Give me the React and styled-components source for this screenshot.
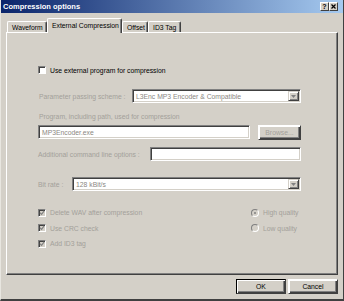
import React from "react";
import styled, { createGlobalStyle } from "styled-components";

const Global = createGlobalStyle`
  html, body {
    margin: 0;
    padding: 0;
    background: #d4d0c8;
  }
  body {
    font-family: "Liberation Sans", Arial, sans-serif;
  }
`;

const Window = styled.div`
  box-sizing: border-box;
  width: 344px;
  height: 301px;
  background: #d4d0c8;
  border-left: 1px solid #e8e6e0;
  border-right: 1px solid #404040;
  border-bottom: 2px solid #404040;
  display: flex;
  flex-direction: column;
  overflow: hidden;
`;

const TitleBar = styled.div`
  height: 13px;
  display: flex;
  align-items: center;
  padding: 0 5px 0 2px;
  background: linear-gradient(to right, #0a246a, #a6caf0);
`;

const Title = styled.div`
  flex: 1;
  color: #fff;
  font-weight: bold;
  font-size: 7.5px;
`;

const CaptionButton = styled.div`
  box-sizing: border-box;
  width: 9px;
  height: 9px;
  background: #d4d0c8;
  border-top: 1px solid #fff;
  border-left: 1px solid #fff;
  border-right: 1px solid #404040;
  border-bottom: 1px solid #404040;
  display: flex;
  align-items: center;
  justify-content: center;
  font-size: 7px;
  font-weight: bold;
  line-height: 1;
  color: #000;
`;

const TabRow = styled.div`
  height: 19px;
  display: flex;
  align-items: flex-end;
  padding-left: 6px;
  position: relative;
  z-index: 1;
`;

const Tab = styled.div`
  box-sizing: border-box;
  height: ${(p) => (p.$active ? "15px" : "11px")};
  margin-bottom: ${(p) => (p.$active ? "-1px" : "0")};
  padding: ${(p) => (p.$active ? "2px 4px 0" : "1px 4px 0")};
  background: #d4d0c8;
  border-top: 1px solid #fff;
  border-left: 1px solid #fff;
  border-right: 1px solid #404040;
  box-shadow: inset -1px 0 #808080;
  border-radius: 2px 2px 0 0;
  font-size: 6.8px;
  line-height: 9px;
  color: #000;
  white-space: nowrap;
  width: ${(p) => p.$w}px;
  text-align: center;
`;

const Panel = styled.div`
  box-sizing: border-box;
  margin: 0 5px 0 5px;
  height: 243px;
  border-top: 1px solid #fff;
  border-left: 1px solid #fff;
  border-right: 1px solid #404040;
  border-bottom: 1px solid #404040;
  box-shadow: inset -1px -1px #808080;
  padding: 0 36px 0 31px;
  display: flex;
  flex-direction: column;
`;

const Row = styled.div`
  display: flex;
  align-items: center;
  height: ${(p) => p.$h || 14}px;
  margin-top: ${(p) => p.$mt}px;
  gap: ${(p) => p.$gap || 0}px;
`;

const Label = styled.div`
  font-size: 6.8px;
  color: ${(p) => (p.$enabled ? "#000" : "#a3a09a")};
  white-space: nowrap;
  width: ${(p) => (p.$w ? `${p.$w}px` : "auto")};
  flex-shrink: 0;
  padding-left: ${(p) => p.$pl || 0}px;
`;

const Sunken = styled.div`
  box-sizing: border-box;
  height: 14px;
  flex: 1;
  background: #fff;
  border-top: 1px solid #808080;
  border-left: 1px solid #808080;
  border-right: 1px solid #fff;
  border-bottom: 1px solid #fff;
  box-shadow: inset 1px 1px #404040, inset -1px -1px #d4d0c8;
  display: flex;
  align-items: center;
  padding-left: 3px;
  font-size: 6.8px;
  color: #8a8782;
  white-space: nowrap;
  overflow: hidden;
`;

const FieldText = styled.div`
  flex: 1;
`;

const ArrowBox = styled.div`
  box-sizing: border-box;
  width: 11px;
  height: 10px;
  margin-right: 1px;
  background: #d4d0c8;
  border-top: 1px solid #d4d0c8;
  border-left: 1px solid #d4d0c8;
  border-right: 1px solid #404040;
  border-bottom: 1px solid #404040;
  box-shadow: inset 1px 1px #fff, inset -1px -1px #808080;
  display: flex;
  align-items: center;
  justify-content: center;
`;

const Button = styled.div`
  box-sizing: border-box;
  width: ${(p) => p.$w}px;
  height: ${(p) => p.$h || 14}px;
  background: #d4d0c8;
  border: 1px solid;
  border-color: ${(p) =>
    p.$default ? "#000 #404040 #404040 #000" : "#fff #404040 #404040 #fff"};
  box-shadow: inset 1px 1px #fff, inset -1px -1px #404040,
    inset -2px -2px #808080;
  display: flex;
  align-items: center;
  justify-content: center;
  font-size: 6.8px;
  color: ${(p) => (p.$disabled ? "#a3a09a" : "#000")};
  flex-shrink: 0;
`;

const Box = styled.div`
  box-sizing: border-box;
  width: 8px;
  height: 8px;
  flex-shrink: 0;
  background: ${(p) => (p.$enabled ? "#fff" : "#d4d0c8")};
  border-top: 1px solid #808080;
  border-left: 1px solid #808080;
  border-right: 1px solid #fff;
  border-bottom: 1px solid #fff;
  box-shadow: inset 1px 1px #404040;
  display: flex;
  align-items: center;
  justify-content: center;
`;

const Radio = styled.div`
  box-sizing: border-box;
  width: 8px;
  height: 8px;
  flex-shrink: 0;
  border-radius: 50%;
  background: #d4d0c8;
  border: 1px solid;
  border-color: #808080 #fff #fff #808080;
  display: flex;
  align-items: center;
  justify-content: center;
`;

const Dot = styled.div`
  width: 2px;
  height: 2px;
  border-radius: 50%;
  background: #808080;
`;

const Options = styled.div`
  margin-top: 14px;
  display: grid;
  grid-template-columns: 213px 1fr;
  grid-auto-rows: 15.5px;
`;

const Option = styled.div`
  display: flex;
  align-items: center;
  gap: 4px;
  grid-column: ${(p) => p.$col};
  grid-row: ${(p) => p.$row};
`;

const Footer = styled.div`
  display: flex;
  justify-content: flex-end;
  gap: 2px;
  padding: 4px 5px 0 0;
`;

const Check = () => (
  <svg width="6" height="6" viewBox="0 0 7 7">
    <path d="M1 3 L3 5 L6 1" fill="none" stroke="#808080" strokeWidth="1.3" />
  </svg>
);

const Arrow = () => (
  <svg width="5" height="3" viewBox="0 0 5 3">
    <path d="M0 0 H5 L2.5 3 Z" fill="#808080" />
  </svg>
);

const Dropdown = ({ value }) => (
  <Sunken>
    <FieldText>{value}</FieldText>
    <ArrowBox>
      <Arrow />
    </ArrowBox>
  </Sunken>
);

export default function App() {
  return (
    <>
      <Global />
      <Window>
        <TitleBar>
          <Title>Compression options</Title>
          <CaptionButton>?</CaptionButton>
          <CaptionButton>
            <svg width="5" height="5" viewBox="0 0 5 5">
              <path d="M0.5 0.5 L4.5 4.5 M4.5 0.5 L0.5 4.5" stroke="#000" strokeWidth="1.2" />
            </svg>
          </CaptionButton>
        </TitleBar>
        <TabRow>
          <Tab $w={40}>Waveform</Tab>
          <Tab $active $w={75}>External Compression</Tab>
          <Tab $w={26}>Offset</Tab>
          <Tab $w={33}>ID3 Tag</Tab>
        </TabRow>
        <Panel>
          <Row $h={10} $mt={32} $gap={4}>
            <Box $enabled />
            <Label $enabled>Use external program for compression</Label>
          </Row>
          <Row $mt={14}>
            <Label $w={93} $pl={1}>Parameter passing scheme :</Label>
            <Dropdown value="L3Enc MP3 Encoder & Compatible" />
          </Row>
          <Row $h={10} $mt={8}>
            <Label $pl={1}>Program, including path, used for compression</Label>
          </Row>
          <Row $mt={4} $gap={8}>
            <Sunken>MP3Encoder.exe</Sunken>
            <Button $w={43} $h={15} $disabled>Browse...</Button>
          </Row>
          <Row $mt={8}>
            <Label $w={112}>Additional command line options :</Label>
            <Sunken />
          </Row>
          <Row $mt={16}>
            <Label $w={34}>Bit rate :</Label>
            <Dropdown value="128 kBit/s" />
          </Row>
          <Options>
            <Option $col={1} $row={1}>
              <Box><Check /></Box>
              <Label>Delete WAV after compression</Label>
            </Option>
            <Option $col={1} $row={2}>
              <Box><Check /></Box>
              <Label>Use CRC check</Label>
            </Option>
            <Option $col={1} $row={3}>
              <Box><Check /></Box>
              <Label>Add ID3 tag</Label>
            </Option>
            <Option $col={2} $row={1}>
              <Radio><Dot /></Radio>
              <Label>High quality</Label>
            </Option>
            <Option $col={2} $row={2}>
              <Radio />
              <Label>Low quality</Label>
            </Option>
          </Options>
        </Panel>
        <Footer>
          <Button $w={50} $h={15} $default>OK</Button>
          <Button $w={50} $h={15}>Cancel</Button>
        </Footer>
      </Window>
    </>
  );
}
